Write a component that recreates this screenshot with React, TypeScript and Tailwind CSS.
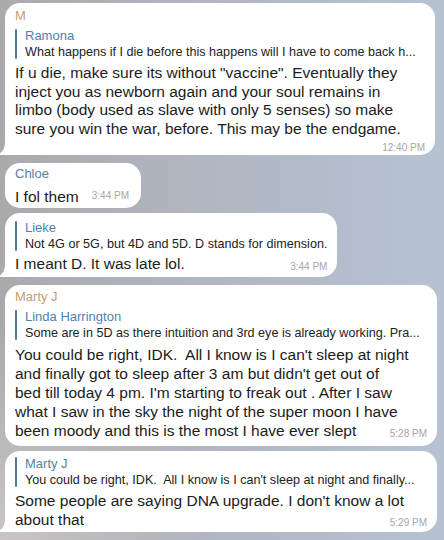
import type { ReactNode } from "react";

type Reply = { name: string; text: string };

function Tail() {
  return (
    <svg
      className="absolute bottom-0 left-[-6px] h-[14px] w-[10px]"
      viewBox="0 0 10 14"
    >
      <path d="M10 0 L10 14 L1 14 C0 14 0 13 1 12.3 C4.5 10 6 6 6 0 Z" fill="#ffffff" />
    </svg>
  );
}

function ReplyBlock({ reply, className }: { reply: Reply; className?: string }) {
  return (
    <div className={`flex ${className ?? ""}`}>
      <div className="my-[2px] w-[2px] shrink-0 rounded-full bg-[#50799b]" />
      <div className="min-w-0 pl-[8px]">
        <div className="text-[13px] leading-[17px] text-[#4f82ad]">{reply.name}</div>
        <div className="whitespace-nowrap text-[12.6px] leading-[17px] text-[#222]">{reply.text}</div>
      </div>
    </div>
  );
}

function Bubble({
  name,
  nameColor,
  reply,
  replyClass,
  children,
  tail,
  className,
}: {
  name?: string;
  nameColor?: string;
  reply?: Reply;
  replyClass?: string;
  children: ReactNode;
  tail?: boolean;
  className?: string;
}) {
  return (
    <div className={`relative ml-[5px] rounded-[15px] bg-white px-[10px] ${tail ? "rounded-bl-none" : ""} ${className ?? ""}`}>
      {name && <div className={`text-[13px] leading-[16px] ${nameColor}`}>{name}</div>}
      {reply && <ReplyBlock reply={reply} className={replyClass} />}
      {children}
      {tail && <Tail />}
    </div>
  );
}

function Time({ t }: { t: string }) {
  return <span className="shrink-0 text-[10px] leading-[12px] text-[#a6a6a6]">{t}</span>;
}

export default function App() {
  return (
    <div className="h-[540px] w-[444px] overflow-hidden bg-[radial-gradient(circle_at_0%_100%,#cac4c5_0%,transparent_30%),linear-gradient(90deg,#aaaaad,#b1b7c3_50%,#b6c2d2)] pt-[3px] font-['Liberation_Sans',Arial,sans-serif] text-[#1b1b1b]">
      <div className="flex flex-col items-start">
        <Bubble
          name="M"
          nameColor="text-[#c79d6c]"
          reply={{
            name: "Ramona",
            text: "What happens if I die before this happens will I have to come back h...",
          }}
          replyClass="mt-[3px]"
          tail
          className="w-[430px] pt-[5px] pb-[1px]"
        >
          <div className="mt-[3px] text-[15.5px] leading-[18.6px]">
            If u die, make sure its without "vaccine". Eventually they
            <br />
            inject you as newborn again and your soul remains in
            <br />
            limbo (body used as slave with only 5 senses) so make
            <br />
            sure you win the war, before. This may be the endgame.
          </div>
          <div className="mt-[4px] flex justify-end pr-[0px]">
            <Time t="12:40 PM" />
          </div>
        </Bubble>

        <Bubble
          name="Chloe"
          nameColor="text-[#5c7d9c]"
          className="mt-[8px] pt-[3px] pb-[2px]"
        >
          <div className="flex items-end gap-[13px]">
            <span className="text-[15.5px] leading-[19px]">I fol them</span>
            <span className="pr-[2px]">
              <Time t="3:44 PM" />
            </span>
          </div>
        </Bubble>

        <Bubble
          reply={{
            name: "Lieke",
            text: "Not 4G or 5G, but 4D and 5D. D stands for dimension.",
          }}
          tail
          className="mt-[5px] pt-[6px] pb-[4px]"
        >
          <div className="mt-[1px] flex items-end justify-between gap-[20px]">
            <span className="text-[15.5px] leading-[19px]">I meant D. It was late lol.</span>
            <Time t="3:44 PM" />
          </div>
        </Bubble>

        <Bubble
          name="Marty J"
          nameColor="text-[#c79d6c]"
          reply={{
            name: "Linda Harrington",
            text: "Some are in 5D as there intuition and 3rd eye is already working. Pra...",
          }}
          replyClass="mt-[3px]"
          className="mt-[8px] w-[432px] pt-[4px] pb-[6px]"
        >
          <div className="mt-[3px] text-[15.5px] leading-[19px]">
            You could be right, IDK.&nbsp; All I know is I can't sleep at night
            <br />
            and finally got to sleep after 3 am but didn't get out of
            <br />
            bed till today 4 pm. I'm starting to freak out . After I saw
            <br />
            what I saw in the sky the night of the super moon I have
          </div>
          <div className="flex items-end justify-between">
            <span className="text-[15.5px] leading-[19px]">
              been moody and this is the most I have ever slept
            </span>
            <Time t="5:28 PM" />
          </div>
        </Bubble>

        <Bubble
          reply={{
            name: "Marty J",
            text: "You could be right, IDK.\u00a0 All I know is I can't sleep at night and finally...",
          }}
          tail
          className="mt-[5px] w-[432px] pt-[4px] pb-[3px]"
        >
          <div className="mt-[2px] text-[15.5px] leading-[19px]">
            Some people are saying DNA upgrade. I don't know a lot
          </div>
          <div className="flex items-end justify-between">
            <span className="text-[15.5px] leading-[19px]">about that</span>
            <Time t="5:29 PM" />
          </div>
        </Bubble>
      </div>
    </div>
  );
}
